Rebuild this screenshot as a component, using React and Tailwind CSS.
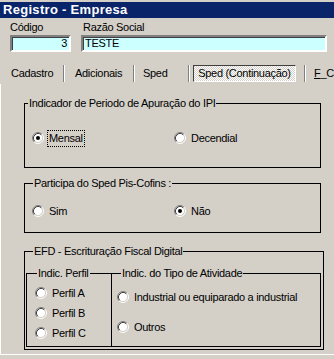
import React from "react";

// classic win32 radio button
const Radio = ({ checked }) => (
	<svg width="12" height="12" viewBox="0 0 12 12" className="shrink-0">
		<circle cx="6" cy="6" r="4.5" fill="#fff" />
		<path d="M2.11 9.89 A5.5 5.5 0 0 1 9.89 2.11" stroke="#808080" fill="none" />
		<path d="M9.89 2.11 A5.5 5.5 0 0 1 2.11 9.89" stroke="#fff" fill="none" />
		<path d="M2.82 9.18 A4.5 4.5 0 0 1 9.18 2.82" stroke="#404040" fill="none" />
		<path d="M9.18 2.82 A4.5 4.5 0 0 1 2.82 9.18" stroke="#d4d0c8" fill="none" />
		{checked && <circle cx="6" cy="6" r="2" fill="#000" />}
	</svg>
);

const Option = ({ label, checked, focused, className = "" }) => (
	<div className={`flex items-center ${className}`}>
		<Radio checked={checked} />
		<span
			className={`ml-[3px] border px-[1px] py-[1px] ${
				focused ? "border-dotted border-black" : "border-transparent"
			}`}
		>
			{label}
		</span>
	</div>
);

const Sep = () => (
	<div className="w-[2px] h-[17px] border-l border-l-[#808080] border-r border-r-white" />
);

const Field = ({ children, className = "" }) => (
	<div
		className={`h-[17px] border-2 border-t-[#808080] border-l-[#808080] border-b-white border-r-white bg-[#ccffff] shadow-[inset_1px_1px_0_#404040] leading-[13px] ${className}`}
	>
		{children}
	</div>
);

export default function App() {
	return (
		<div className="w-[334px] h-[359px] overflow-hidden bg-[#d4d0c8] text-[11px] leading-[13px] tracking-[-0.3px] text-black font-['Liberation_Sans',Arial,sans-serif]">
			<div className="mt-[2px] h-4 bg-[#0a246a] pl-[3px] text-[13px] leading-4 tracking-[0.3px] font-bold text-white">
				Registro - Empresa
			</div>

			<div className="flex pl-[10px] mt-[3px]">
				<div className="w-[61px]">
					<div>Código</div>
					<Field className="mt-[1px] text-right pr-[2px]">3</Field>
				</div>
				<div className="ml-[10px] w-[246px]">
					<div className="pl-[2px]">Razão Social</div>
					<Field className="mt-[1px] pl-[2px]">TESTE</Field>
				</div>
			</div>

			<div className="mt-[13px] flex items-center h-[17px] whitespace-nowrap">
				<span className="pl-[11px] w-[63px]">Cadastro</span>
				<Sep />
				<span className="pl-[10px] w-[68px]">Adicionais</span>
				<Sep />
				<span className="pl-[8px] w-[53px]">Sped</span>
				<Sep />
				<div className="ml-[3px] w-[103px] h-[17px] flex items-center justify-center border border-t-[#404040] border-l-[#404040] border-b-white border-r-white bg-[repeating-conic-gradient(#ffffff_0_25%,#d4d0c8_0_50%)] bg-[length:2px_2px]">
					Sped (Continuação)
				</div>
				<div className="w-[8px]" />
				<Sep />
				<span className="pl-[8px]">
					<span className="underline">F</span>_C
				</span>
			</div>

			<div className="mt-[2px] border-l border-b border-white pt-[13px] pb-[4px]">
				<fieldset className="ml-[23px] w-[297px] border border-black pt-[19px] pb-[20px]">
					<legend className="ml-[3px] px-[1px]">Indicador de Periodo de Apuração do IPI</legend>
					<div className="flex items-center h-[18px] pl-[7px]">
						<Option label="Mensal" checked focused className="w-[142px]" />
						<Option label="Decendial" />
					</div>
				</fieldset>

				<fieldset className="mt-[9px] ml-[23px] w-[297px] border border-black pt-[12px] pb-[12px]">
					<legend className="ml-[8px] px-[1px]">Participa do Sped Pis-Cofins :</legend>
					<div className="flex items-center h-[18px] pl-[7px]">
						<Option label="Sim" className="w-[142px]" />
						<Option label="Não" checked />
					</div>
				</fieldset>

				<fieldset className="mt-[12px] ml-[23px] w-[300px] border border-black pt-[9px] pb-[2px] pl-[1px] pr-[2px]">
					<legend className="ml-[7px] px-[1px]">EFD - Escrituração Fiscal Digital</legend>
					<div className="flex">
						<fieldset className="w-[86px] border border-black pt-[3px] pb-[3px] pl-[8px]">
							<legend className="ml-[2px] px-[1px]">Indic. Perfil</legend>
							<Option label="Perfil A" className="h-[20px]" />
							<Option label="Perfil B" className="h-[20px]" />
							<Option label="Perfil C" className="h-[20px]" />
						</fieldset>
						<fieldset className="flex-1 border border-black border-l-0 pt-[3px] pb-[3px] pl-[5px]">
							<legend className="ml-[4px] px-[1px]">Indic. do Tipo de Atividade</legend>
							<Option label="Industrial ou equiparado a industrial" className="mt-[5px] h-[18px]" />
							<Option label="Outros" className="mt-[12px] h-[18px]" />
						</fieldset>
					</div>
				</fieldset>
			</div>
		</div>
	);
}
